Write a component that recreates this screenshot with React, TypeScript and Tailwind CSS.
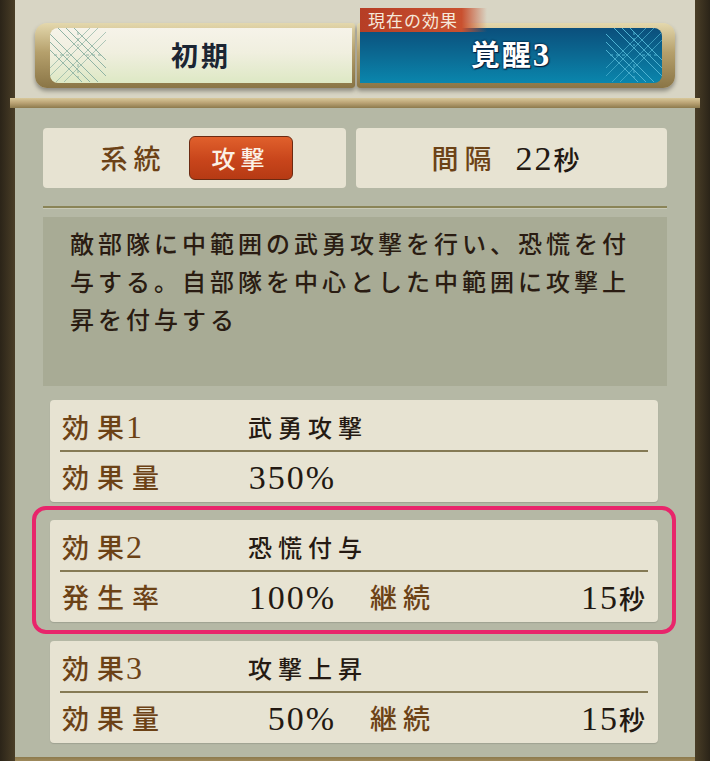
const jp = "font-['Noto_Sans_CJK_JP',sans-serif]";
const num = "font-['Liberation_Serif','Noto_Sans_CJK_JP',serif]";

// 菱格子の飾り（タブの端）
function Lattice({ stroke }: { stroke: string }) {
  return (
    <svg width="56" height="54" viewBox="0 0 56 54" fill="none" stroke={stroke} strokeWidth="1">
      <path d="M0 6 L48 54 M0 14 L40 54 M0 22 L32 54 M8 0 L56 48 M16 0 L56 40 M24 0 L56 32" />
      <path d="M0 40 L40 0 M0 48 L48 0 M6 54 L56 4 M14 54 L56 12" opacity="0.7" />
      <path d="M4 27 H20 M36 27 H52 M28 4 V18 M28 36 V50" strokeDasharray="3 3" />
    </svg>
  );
}

function EffectCard({
  num: n,
  name,
  label2,
  value2,
  extra,
}: {
  num: string;
  name: string;
  label2: string;
  value2: string;
  extra?: boolean;
}) {
  return (
    <div className="bg-[#e7e3d2] rounded-[4px] px-[10px] shadow-[0_1px_1px_rgba(0,0,0,0.12)]">
      <div className="h-[50px] flex items-center pl-[2px] pt-[4px]">
        <div className={`w-[186px] text-[27px] text-[#6c4216] font-medium ${jp}`}>
          <span className="tracking-[8px]">効</span>
          <span className="tracking-[2px]">果</span>
          <span className={`${num} text-[32px]`}>{n}</span>
        </div>
        <div className={`text-[24px] tracking-[6px] text-[#251a12] font-medium ${jp}`}>{name}</div>
      </div>
      <div className="h-[2px] bg-[#857a55]" />
      <div className="h-[50px] flex items-center pl-[2px] pr-[3px]">
        <div className={`w-[186px] text-[27px] tracking-[8px] text-[#6c4216] font-medium ${jp}`}>{label2}</div>
        <div className={`w-[88px] text-right text-[34px] tracking-[2px] text-[#231912] ${num}`}>{value2}</div>
        {extra && (
          <>
            <div className={`ml-[34px] text-[27px] tracking-[6px] text-[#6c4216] font-medium ${jp}`}>継続</div>
            <div className={`flex-1 text-right text-[34px] tracking-[2px] text-[#231912] ${num}`}>
              15<span className={`${jp} text-[26px] tracking-normal font-medium`}>秒</span>
            </div>
          </>
        )}
      </div>
    </div>
  );
}

export default function App() {
  return (
    <div className="w-[710px] h-[761px] overflow-hidden flex bg-[#3b3121]">
      <div className="w-[15px] shrink-0 bg-[linear-gradient(90deg,#2b2418,#4a3e27)]" />

      <div className="flex-1 flex flex-col">
        {/* タブ */}
        <div className="h-[98px] shrink-0 bg-[#d8d5c4] pt-[23px] pl-[20px] flex">
          <div className="w-[320px] h-[65px] rounded-l-[12px] rounded-r-[3px] bg-[linear-gradient(180deg,#e4d8ad,#b5a06c_45%,#8a7546)] pl-[15px] pr-[3px] py-[5px] flex shadow-[0_3px_4px_rgba(0,0,0,0.35)]">
            <div className="relative flex-1 rounded-l-[8px] bg-[linear-gradient(180deg,#f6f3e9,#f0efdf_45%,#dde8c4)] flex items-center justify-center overflow-hidden">
              <div className="absolute left-0 top-0">
                <Lattice stroke="#8fb3a4" />
              </div>
              <span className={`text-[27px] font-bold tracking-[3px] text-[#1b2533] ${jp}`}>初期</span>
            </div>
          </div>

          <div className="relative ml-[2px] w-[318px] h-[65px] rounded-r-[12px] rounded-l-[3px] bg-[linear-gradient(180deg,#e4d8ad,#b5a06c_45%,#8a7546)] pl-[3px] pr-[13px] py-[5px] flex shadow-[0_3px_4px_rgba(0,0,0,0.35)]">
            <div className="relative flex-1 rounded-r-[8px] bg-[linear-gradient(180deg,#0b4f7c,#0b6a93_50%,#0a86ad)] flex items-center justify-center overflow-hidden">
              <div className="absolute right-0 top-0">
                <Lattice stroke="#4fb3d2" />
              </div>
              <span
                className={`text-[29px] font-bold tracking-[2px] text-white ${jp} [text-shadow:0_0_2px_#0a1f3d,0_0_2px_#0a1f3d,1px_1px_1px_#0a1f3d]`}
              >
                覚醒<span className={`${num} text-[33px]`}>3</span>
              </span>
            </div>
            <div className="absolute left-[3px] top-[-15px] w-[127px] h-[24px] bg-[linear-gradient(90deg,#b63e25,#c9502f_80%,rgba(201,80,47,0))] flex items-center pl-[8px]">
              <span className={`text-[17px] text-[#f6e8da] tracking-[1px] ${jp}`}>現在の効果</span>
            </div>
          </div>
        </div>

        {/* 金の帯 */}
        <div className="relative z-10 -mx-[5px] h-[10px] shrink-0 bg-[linear-gradient(180deg,#d9c89a,#b9a274_50%,#8d7a4d)]" />

        <div className="flex-1 bg-[#b5b8a5] pl-[28px] pr-[28px] pt-[20px] flex flex-col">
          <div className="flex gap-[10px]">
            <div className="flex-1 h-[60px] bg-[#e7e3d2] rounded-[4px] flex items-center justify-center gap-[22px] pl-[4px]">
              <span className={`text-[27px] tracking-[6px] text-[#6c4216] font-medium ${jp}`}>系統</span>
              <span
                className={`w-[104px] h-[44px] rounded-[6px] border border-[#6b2a12] bg-[linear-gradient(180deg,#e0602c,#c8451b_55%,#b63a14)] flex items-center justify-center text-[24px] tracking-[5px] font-medium text-[#fbf1e6] ${jp}`}
              >
                攻撃
              </span>
            </div>
            <div className="flex-1 h-[60px] bg-[#e7e3d2] rounded-[4px] flex items-center justify-center gap-[18px] pr-[12px]">
              <span className={`text-[27px] tracking-[6px] text-[#6c4216] font-medium ${jp}`}>間隔</span>
              <span className={`text-[34px] tracking-[2px] text-[#231912] ${num}`}>
                22<span className={`${jp} text-[26px] tracking-normal font-medium`}>秒</span>
              </span>
            </div>
          </div>

          <div className="mt-[18px] h-[2px] bg-[#8a8457] shadow-[0_1px_0_#c9cab8]" />

          <div className="mt-[9px] h-[169px] bg-[#a8ab95] pl-[27px] pr-[20px] pt-[7px]">
            <p className={`text-[24px] leading-[38px] tracking-[4px] font-medium text-[#2a1c12] ${jp}`}>
              敵部隊に中範囲の武勇攻撃を行い、恐慌を付与する。自部隊を中心とした中範囲に攻撃上昇を付与する
            </p>
          </div>

          <div className="mt-[14px] ml-[7px] mr-[9px]">
            <EffectCard num="1" name="武勇攻撃" label2="効果量" value2="350%" />
          </div>

          <div className="mt-[4px] -ml-[11px] -mr-[9px] border-[4px] border-[#e8256b] rounded-[14px] pt-[10px] pb-[8px] px-[14px]">
            <EffectCard num="2" name="恐慌付与" label2="発生率" value2="100%" extra />
          </div>

          <div className="mt-[7px] ml-[7px] mr-[9px]">
            <EffectCard num="3" name="攻撃上昇" label2="効果量" value2="50%" extra />
          </div>

          <div className="mt-[14px] -mx-[28px] h-[10px] bg-[linear-gradient(180deg,#8d7a4d,#b9a274)]" />
        </div>
      </div>

      <div className="w-[15px] shrink-0 bg-[linear-gradient(90deg,#4a3e27,#2b2418)]" />
    </div>
  );
}
